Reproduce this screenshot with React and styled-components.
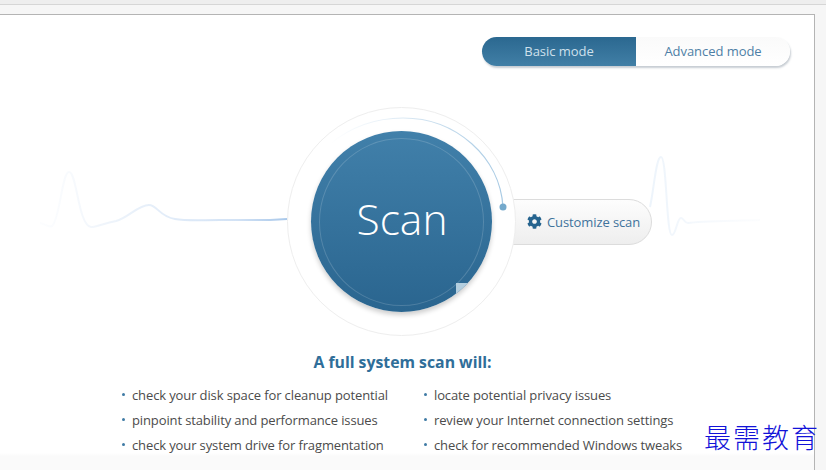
import React from "react";
import styled, { createGlobalStyle } from "styled-components";
import { FaCog } from "react-icons/fa";

const Global = createGlobalStyle`
  html, body { margin: 0; padding: 0; width: 826px; height: 470px; overflow: hidden; background: #f6f6f6; }
  * { box-sizing: border-box; }
`;

const Page = styled.div`
  position: relative;
  width: 826px;
  height: 470px;
  overflow: hidden;
  font-family: "Open Sans", "Noto Sans", "Liberation Sans", sans-serif;
  display: flex;
  flex-direction: column;
`;

const TopBar = styled.div`
  height: 5px;
  background: #eeeeee;
  border-bottom: 1px solid #d6d6d6;
  flex: none;
`;

const Strip = styled.div`
  height: 9px;
  background: #f6f6f6;
  flex: none;
`;

const Panel = styled.main`
  flex: 1;
  width: 815px;
  border-top: 1px solid #b4b4b4;
  border-right: 1px solid #b4b4b4;
  background: linear-gradient(#fff 0, #fff 438px, #fafafa 441px, #fafafa 100%);
  display: flex;
  flex-direction: column;
`;

const ToggleRow = styled.div`
  display: flex;
  justify-content: flex-end;
  padding: 22px 24px 0 0;
`;

const Toggle = styled.div`
  display: flex;
  width: 308px;
  height: 29px;
  border-radius: 15px;
  box-shadow: 1px 2px 2px rgba(70, 90, 110, 0.3);
`;

const ModeButton = styled.div`
  width: 154px;
  display: flex;
  align-items: center;
  justify-content: center;
  padding-bottom: 2px;
  font-size: 13px;
  letter-spacing: -0.05px;
  color: ${(p) => (p.$active ? "#cfe0ec" : "#4e7fa6")};
  background: ${(p) => (p.$active ? "linear-gradient(#2b6890, #417fa6)" : "linear-gradient(#fafafa, #ffffff)")};
  border-radius: ${(p) => (p.$active ? "15px 0 0 15px" : "0 15px 15px 0")};
`;

const Stage = styled.section`
  position: relative;
  height: 229px;
  margin-top: 41px;
  padding-left: 287px;
  display: flex;
  align-items: center;
`;

const Waves = styled.svg`
  position: absolute;
  left: 0;
  top: -93px;
  width: 814px;
  height: 456px;
  pointer-events: none;
  z-index: 3;
`;

const Ring = styled.div`
  position: relative;
  z-index: 2;
  flex: none;
  width: 229px;
  height: 229px;
  border-radius: 50%;
  background: #fff;
  border: 1px solid #eeeeee;
  display: flex;
  align-items: center;
  justify-content: center;
`;

const ScanButton = styled.div`
  position: relative;
  width: 181px;
  height: 181px;
  border-radius: 50%;
  overflow: hidden;
  background: linear-gradient(#4180aa, #2a658f);
  display: flex;
  align-items: center;
  justify-content: center;
  color: #fff;
  font-size: 42.5px;
  font-weight: 300;
  padding: 0 0 7px 1px;
`;

const ScanShadow = styled.div`
  position: absolute;
  width: 181px;
  height: 181px;
  border-radius: 50%;
  box-shadow: 0 3px 5px rgba(0, 0, 0, 0.2);
`;

const InnerRing = styled.div`
  position: absolute;
  inset: 7px 8px 6px 8px;
  border-radius: 50%;
  border: 1px solid rgba(255, 255, 255, 0.16);
`;

const Fold = styled.div`
  position: absolute;
  left: 145px;
  top: 152px;
  width: 16px;
  height: 16px;
  background: #b3cedf;
`;

const CustomizePill = styled.div`
  position: relative;
  z-index: 1;
  flex: none;
  margin-left: -30px;
  width: 166px;
  height: 46px;
  padding-left: 40px;
  border-radius: 0 23px 23px 0;
  border: 1px solid #dcdcdc;
  background: linear-gradient(#fdfdfd, #eeeeee);
  display: flex;
  align-items: center;
  gap: 5px;
  color: #3f739c;
  font-size: 13px;
  letter-spacing: -0.1px;
  white-space: nowrap;
  svg { color: #26648f; flex: none; }
`;

const Heading = styled.h2`
  margin: 15px 0 0 0;
  padding-right: 9px;
  text-align: center;
  color: #2f6e99;
  font-size: 15.8px;
  line-height: 22px;
  font-weight: 700;
`;

const Features = styled.ul`
  list-style: none;
  margin: 9px 0 0 122px;
  padding: 0;
  display: grid;
  grid-template-columns: 302px 1fr;
  grid-auto-rows: 25px;
`;

const Feature = styled.li`
  display: flex;
  align-items: center;
  gap: 7px;
  font-size: 13px;
  letter-spacing: -0.12px;
  color: #4b4b4b;
  white-space: nowrap;
  &::before {
    content: "";
    width: 3px;
    height: 3px;
    border-radius: 50%;
    background: #3f7ba5;
    flex: none;
  }
`;

const Watermark = styled.div`
  position: absolute;
  left: 704px;
  top: 421px;
  color: #1212d8;
  font-family: "Noto Sans CJK SC", "Noto Sans CJK JP", sans-serif;
  font-size: 27px;
  font-weight: 300;
  line-height: 32px;
  letter-spacing: 2px;
  white-space: nowrap;
  z-index: 5;
`;

const left = ["check your disk space for cleanup potential", "pinpoint stability and performance issues", "check your system drive for fragmentation"];
const right = ["locate potential privacy issues", "review your Internet connection settings", "check for recommended Windows tweaks"];

export default function App() {
  return (
    <Page>
      <Global />
      <TopBar />
      <Strip />
      <Panel>
        <ToggleRow>
          <Toggle>
            <ModeButton $active>Basic mode</ModeButton>
            <ModeButton>Advanced mode</ModeButton>
          </Toggle>
        </ToggleRow>
        <Stage>
          <Waves viewBox="0 15 814 456">
            <defs>
              <linearGradient id="wl" x1="40" x2="287" y1="0" y2="0" gradientUnits="userSpaceOnUse">
                <stop offset="0" stopColor="#f6f9fd" stopOpacity="0.3" />
                <stop offset="0.25" stopColor="#f0f5fb" />
                <stop offset="0.5" stopColor="#e3edf9" />
                <stop offset="0.8" stopColor="#d2e2f5" />
                <stop offset="1" stopColor="#a9c8ea" />
              </linearGradient>
              <linearGradient id="wr" x1="650" x2="770" y1="0" y2="0" gradientUnits="userSpaceOnUse">
                <stop offset="0" stopColor="#edf4fb" />
                <stop offset="1" stopColor="#f8fafd" stopOpacity="0.4" />
              </linearGradient>
              <linearGradient id="arc" x1="330" x2="503" y1="0" y2="0" gradientUnits="userSpaceOnUse">
                <stop offset="0" stopColor="#e0ecf6" stopOpacity="0" />
                <stop offset="0.5" stopColor="#d3e4f1" />
                <stop offset="1" stopColor="#a6c9e3" />
              </linearGradient>
            </defs>
            <path fill="none" stroke="url(#wl)" strokeWidth="2" d="M40 224 C46 225 48 229 52 227 C60 220 62 173 69 173 C77 173 78 226 91 228 C97 228 104 224 116 222 C128 219 138 206 149 206 C157 206 160 218 175 220 C186 222 200 221 220 221 L270 221 L287 220" />
            <path fill="none" stroke="url(#wr)" strokeWidth="2" d="M650 208 C654 190 656 158 661 158 C667 158 666 236 672 236 C676 236 677 219 681 219 C684 219 684 224 688 224 C700 222 730 222 760 221" />
            <path fill="none" stroke="url(#arc)" strokeWidth="1.2" d="M330 145 C352 127 378 119 403 119 C456 119 500 158 503 208" />
            <circle cx="503" cy="208" r="3.5" fill="#74a9cc" />
          </Waves>
          <Ring>
            <ScanShadow />
            <ScanButton>
              <InnerRing />
              <Fold />
              Scan
            </ScanButton>
          </Ring>
          <CustomizePill>
            <FaCog size={15} />
            Customize scan
          </CustomizePill>
        </Stage>
        <Heading>A full system scan will:</Heading>
        <Features>
          {left.map((t, i) => (
            <React.Fragment key={t}>
              <Feature>{t}</Feature>
              <Feature>{right[i]}</Feature>
            </React.Fragment>
          ))}
        </Features>
      </Panel>
      <Watermark>最需教育</Watermark>
    </Page>
  );
}
